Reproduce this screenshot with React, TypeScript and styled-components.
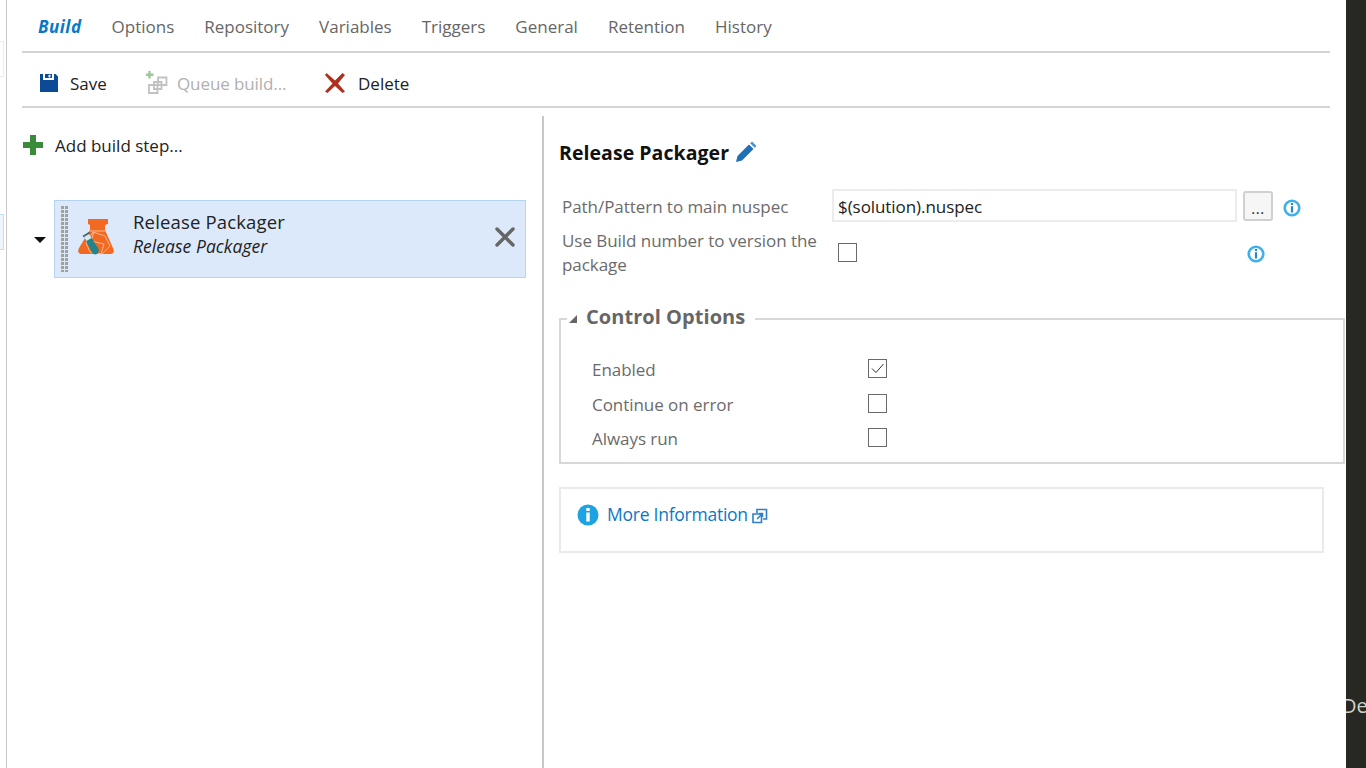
import React from 'react'
import styled, { createGlobalStyle } from 'styled-components'

const GlobalStyle = createGlobalStyle`
  html, body {
    margin: 0;
    padding: 0;
    height: 100%;
    overflow: hidden;
    background: #fff;
  }
  body {
    font-family: 'Open Sans', 'Noto Sans', sans-serif;
    color: #222;
  }
`

const Page = styled.div`
  display: flex;
  width: 1366px;
  height: 768px;
  overflow: hidden;
`

const Gutter = styled.div`
  width: 6px;
  height: 768px;
  flex: none;
  border-right: 1px solid #c8c8c8;
  padding-top: 41px;
  box-sizing: content-box;
`

const GutterTab = styled.div<{ $active?: boolean }>`
  width: 3px;
  height: 34px;
  margin-bottom: 137px;
  border: 1px solid ${({ $active }) => ($active ? '#c4dcf6' : '#ececec')};
  border-left: 0;
  background: ${({ $active }) => ($active ? '#eef5fd' : '#fff')};
`

const Main = styled.div`
  width: 1339px;
  flex: none;
  height: 768px;
  padding: 0 16px 0 15px;
  box-sizing: border-box;
  display: flex;
  flex-direction: column;
`

const Tabs = styled.nav`
  height: 53px;
  box-sizing: border-box;
  flex: none;
  display: flex;
  align-items: center;
  gap: 30px;
  padding: 1px 0 0 16px;
  border-bottom: 2px solid #d4d4d4;
`

const Tab = styled.a<{ $active?: boolean }>`
  font-size: 17px;
  letter-spacing: ${({ $active }) => ($active ? '0.5px' : '0')};
  color: ${({ $active }) => ($active ? '#0a78c8' : '#666')};
  font-weight: ${({ $active }) => ($active ? 700 : 400)};
  font-style: ${({ $active }) => ($active ? 'italic' : 'normal')};
`

const Toolbar = styled.div`
  height: 55px;
  box-sizing: border-box;
  flex: none;
  display: flex;
  align-items: center;
  padding: 7px 0 0 17px;
  border-bottom: 2px solid #d4d4d4;
`

const ToolButton = styled.button<{ $disabled?: boolean; $width: number; $gap: number }>`
  display: flex;
  align-items: center;
  gap: ${({ $gap }) => $gap}px;
  width: ${({ $width }) => $width}px;
  padding: 0;
  border: 0;
  background: none;
  font: inherit;
  font-size: 17px;
  letter-spacing: ${({ $disabled }) => ($disabled ? '-0.1px' : '0')};
  color: ${({ $disabled }) => ($disabled ? '#b0b0b0' : '#222')};
`

const Body = styled.div`
  flex: 1;
  display: flex;
  padding-top: 8px;
  min-height: 0;
`

const LeftPane = styled.div`
  width: 520px;
  flex: none;
  border-right: 2px solid #c8c8c8;
`

const AddStep = styled.div`
  display: flex;
  align-items: center;
  gap: 11px;
  height: 30px;
  margin-top: 14px;
  font-size: 17px;
  color: #222;
`

const StepRow = styled.div`
  display: flex;
  align-items: center;
  margin-top: 40px;
`

const Caret = styled.span`
  width: 0;
  height: 0;
  margin: 2px 8px 0 12px;
  border-left: 6px solid transparent;
  border-right: 6px solid transparent;
  border-top: 6px solid #111;
`

const StepCard = styled.div`
  width: 472px;
  height: 78px;
  box-sizing: border-box;
  border: 1px solid #b5d4f4;
  background: #dbe9fa;
  display: flex;
  align-items: center;
  padding: 0 9px 0 6px;
`

const StepText = styled.div`
  flex: 1;
  align-self: flex-start;
  margin: 8px 0 0 18px;
`

const StepTitle = styled.div`
  font-size: 18.5px;
  line-height: 25px;
  letter-spacing: 0.16px;
  color: #222;
`

const StepSubtitle = styled.div`
  font-size: 17.5px;
  line-height: 25px;
  font-style: italic;
  letter-spacing: 0.05px;
  color: #222;
`

const RightPane = styled.div`
  flex: 1;
  min-width: 0;
  padding: 20px 0 0 15px;
`

const TaskHeading = styled.h2`
  display: flex;
  align-items: center;
  gap: 6px;
  height: 32px;
  margin: 0 0 21px;
  font-size: 19.5px;
  font-weight: 700;
  letter-spacing: 0.05px;
  color: #111;
`

const FieldRow = styled.div`
  display: flex;
  align-items: flex-start;
  padding-left: 3px;
`

const FieldLabel = styled.label<{ $pad: number }>`
  width: 270px;
  flex: none;
  font-size: 17px;
  line-height: 24px;
  letter-spacing: -0.05px;
  color: #6b6b6b;
  padding-top: ${({ $pad }) => $pad}px;
`

const TextInput = styled.input`
  width: 405px;
  height: 33px;
  box-sizing: border-box;
  flex: none;
  padding: 2px 4px 0;
  border: 2px solid #ececec;
  outline: none;
  background: #fff;
  font: inherit;
  font-size: 17px;
  letter-spacing: -0.07px;
  color: #222;
`

const BrowseButton = styled.button`
  width: 30px;
  height: 30px;
  margin: 2px 0 0 6px;
  padding: 4px 0 0;
  border: 2px solid #d0d0d0;
  border-radius: 3px;
  background: #f6f6f6;
  font: inherit;
  font-size: 15px;
  letter-spacing: 0.6px;
  color: #222;
`

const CheckBox = styled.span<{ $left: number; $top?: number }>`
  display: inline-flex;
  align-items: center;
  justify-content: center;
  width: 19px;
  height: 19px;
  box-sizing: border-box;
  flex: none;
  border: 1px solid #6a6a6a;
  background: #fff;
  margin-left: ${({ $left }) => $left}px;
  margin-top: ${({ $top }) => $top ?? 0}px;
`

const InfoSpot = styled.span<{ $left: number; $top: number }>`
  display: inline-flex;
  flex: none;
  margin-left: ${({ $left }) => $left}px;
  margin-top: ${({ $top }) => $top}px;
`

const Section = styled.fieldset`
  width: 786px;
  height: 158px;
  box-sizing: border-box;
  margin: 29px 0 0 0;
  padding: 27px 0 0 31px;
  border: 2px solid #d8d8d8;
`

const SectionLegend = styled.legend`
  display: flex;
  align-items: center;
  gap: 9px;
  margin-left: -25px;
  padding: 0 10px 0 2px;
  font-size: 20px;
  line-height: 26px;
  font-weight: 700;
  letter-spacing: 0.05px;
  color: #666;
  transform: translateY(-2px);
`

const LegendCaret = styled.span`
  width: 0;
  height: 0;
  margin-top: 3px;
  border-left: 8px solid transparent;
  border-bottom: 8px solid #666;
`

const OptionRow = styled.div`
  display: flex;
  align-items: flex-start;
  height: 34.5px;
`

const OptionLabel = styled.span`
  width: 267px;
  flex: none;
  margin-top: 1px;
  font-size: 17px;
  line-height: 19px;
  letter-spacing: -0.05px;
  color: #6b6b6b;
`

const InfoBox = styled.div`
  width: 765px;
  height: 66px;
  box-sizing: border-box;
  margin: 23px 0 0 0;
  padding: 15px 0 0 16px;
  border: 2px solid #eaeaea;
  display: flex;
  align-items: flex-start;
  gap: 8px;
`

const InfoLink = styled.a`
  display: flex;
  align-items: center;
  gap: 4px;
  height: 24px;
  margin-top: -2px;
  font-size: 17.5px;
  letter-spacing: -0.25px;
  color: #0a78c8;
`

const SidePanel = styled.div`
  flex: 1;
  height: 768px;
  background: #272822;
  overflow: hidden;
  padding-top: 692px;
  box-sizing: border-box;
`

const SideText = styled.div`
  margin-left: -4px;
  font-size: 20px;
  line-height: 28px;
  color: #d0d0c8;
  white-space: nowrap;
`

const SaveIcon = () => (
  <svg width="20" height="20" viewBox="0 0 20 20">
    <path d="M1 1h3v6h11V1h1.500L19 3.500V19H1z" fill="#0b4a94" />
    <path d="M6 1h7v4H6z" fill="#0b4a94" />
    <path d="M9.500 1.800h2v2.600h-2z" fill="#fff" />
  </svg>
)

const QueueIcon = () => (
  <svg width="24" height="24" viewBox="0 0 24 24" fill="none">
    <path d="M4.500 0v7.500M1 3.800h7.500" stroke="#9cc79c" strokeWidth="2.400" />
    <path d="M13 6.500h8.500v7.500H13zM4 14h8.500v8H4zM9 11h7.500v7H9z" stroke="#c2c2c2" strokeWidth="1.800" />
  </svg>
)

const DeleteIcon = () => (
  <svg width="22" height="22" viewBox="0 0 22 22">
    <path d="M2.500 1 11 8.500 18.500 1 21 3l-7 8.500 7 8-2.500 1.500L11 14l-7.500 7L1 19.500l7.500-8L1 3z" fill="#b03020" />
  </svg>
)

const PlusIcon = () => (
  <svg width="22" height="22" viewBox="0 0 22 22">
    <path d="M8 1h6v7h7v6h-7v7H8v-7H1V8h7z" fill="#3b8c3a" />
  </svg>
)

const Gripper = () => (
  <svg width="8" height="66" viewBox="0 0 8 66">
    <pattern id="grip" width="4" height="4" patternUnits="userSpaceOnUse">
      <rect width="3" height="3" fill="#a0a0a0" />
    </pattern>
    <rect width="8" height="66" fill="url(#grip)" />
  </svg>
)

const FlaskIcon = () => (
  <svg width="38" height="40" viewBox="0 0 38 40" style={{ marginLeft: 8, marginTop: -4 }}>
    <path d="M11 2h20v5l-3 1v5l8 18c2 4 0 6-3 6H5c-3 0-5-2-3-6l11-18V8l-2-1z" fill="#f26a21" />
    <path d="M13 14h15M9 26l7-11 12 4 5 10-8 8-12-2zM17 15l-3 9 13 3M24 37l3-10" stroke="#f9b892" strokeWidth="1" fill="none" />
    <path d="M7 20l5-3 9 14c1.500 3 .5 5-1 6s-3.500 .5-5-1.500z" fill="#22858c" />
    <path d="M7 20l5-3 2.500 4-5 3z" fill="#dbe9ee" />
    <path d="M6 19.500l6.500-4" stroke="#4b6272" strokeWidth="1.500" />
  </svg>
)

const RemoveIcon = () => (
  <svg width="22" height="22" viewBox="0 0 22 22" style={{ marginTop: -4 }}>
    <path d="M3 3l16 16M19 3 3 19" stroke="#666" strokeWidth="3.400" strokeLinecap="round" />
  </svg>
)

const PencilIcon = () => (
  <svg width="22" height="22" viewBox="0 0 22 22">
    <path d="M1 21l1.500-6L14 3.500l4.500 4.500L7 19.500z" fill="#1f6fb8" />
    <path d="M15.200 2.300 17 .5l4.500 4.500-1.800 1.800z" fill="#4a90d0" />
  </svg>
)

const RingInfo = () => (
  <svg width="18" height="18" viewBox="0 0 18 18">
    <circle cx="9" cy="9" r="7.300" fill="#fff" stroke="#3fb0ec" strokeWidth="2.600" />
    <rect x="7.900" y="4" width="2.200" height="2" fill="#2a87c0" />
    <rect x="7.900" y="7.200" width="2.200" height="6.300" fill="#2a87c0" />
  </svg>
)

const SolidInfo = () => (
  <svg width="22" height="22" viewBox="0 0 22 22">
    <circle cx="11" cy="11" r="10.500" fill="#1ea3e2" />
    <rect x="9.300" y="4" width="3.400" height="3" fill="#fff" />
    <rect x="9.300" y="8.500" width="3.400" height="9" fill="#fff" />
  </svg>
)

const ExternalIcon = () => (
  <svg width="16" height="16" viewBox="0 0 16 16" fill="none" style={{ marginTop: 4 }}>
    <path d="M1 6h8.500v8.500H1z" stroke="#2f7fc4" strokeWidth="1.600" />
    <path d="M5 5V1.500h9.500V11H11" stroke="#2f7fc4" strokeWidth="1.600" />
    <path d="M5 11l5-5M7 5.500h3.500V9" stroke="#2f7fc4" strokeWidth="1.500" />
  </svg>
)

const CheckMark = () => (
  <svg width="15" height="15" viewBox="0 0 15 15" fill="none">
    <path d="M2 7.500 6 11.500 13.500 3" stroke="#333" strokeWidth="1" />
  </svg>
)

const TABS = ['Build', 'Options', 'Repository', 'Variables', 'Triggers', 'General', 'Retention', 'History']

const OPTIONS = [
  { label: 'Enabled', checked: true },
  { label: 'Continue on error', checked: false },
  { label: 'Always run', checked: false },
]

export default function App() {
  return (
    <Page>
      <GlobalStyle />
      <Gutter>
        <GutterTab />
        <GutterTab $active />
      </Gutter>
      <Main>
        <Tabs>
          {TABS.map((tab) => (
            <Tab key={tab} $active={tab === 'Build'}>
              {tab}
            </Tab>
          ))}
        </Tabs>
        <Toolbar>
          <ToolButton $width={106} $gap={11}>
            <SaveIcon />
            Save
          </ToolButton>
          <ToolButton $width={179} $gap={8} $disabled>
            <QueueIcon />
            Queue build...
          </ToolButton>
          <ToolButton $width={110} $gap={12}>
            <DeleteIcon />
            Delete
          </ToolButton>
        </Toolbar>
        <Body>
          <LeftPane>
            <AddStep>
              <PlusIcon />
              Add build step...
            </AddStep>
            <StepRow>
              <Caret />
              <StepCard>
                <Gripper />
                <FlaskIcon />
                <StepText>
                  <StepTitle>Release Packager</StepTitle>
                  <StepSubtitle>Release Packager</StepSubtitle>
                </StepText>
                <RemoveIcon />
              </StepCard>
            </StepRow>
          </LeftPane>
          <RightPane>
            <TaskHeading>
              Release Packager
              <PencilIcon />
            </TaskHeading>
            <FieldRow>
              <FieldLabel $pad={6}>Path/Pattern to main nuspec</FieldLabel>
              <TextInput defaultValue="$(solution).nuspec" readOnly />
              <BrowseButton>...</BrowseButton>
              <InfoSpot $left={10} $top={10}>
                <RingInfo />
              </InfoSpot>
            </FieldRow>
            <FieldRow>
              <FieldLabel $pad={7}>
                Use Build number to version the package
              </FieldLabel>
              <CheckBox $left={6} $top={21} />
              <InfoSpot $left={390} $top={23}>
                <RingInfo />
              </InfoSpot>
            </FieldRow>
            <Section>
              <SectionLegend>
                <LegendCaret />
                Control Options
              </SectionLegend>
              {OPTIONS.map((option) => (
                <OptionRow key={option.label}>
                  <OptionLabel>{option.label}</OptionLabel>
                  <CheckBox $left={9}>{option.checked && <CheckMark />}</CheckBox>
                </OptionRow>
              ))}
            </Section>
            <InfoBox>
              <SolidInfo />
              <InfoLink>
                More Information
                <ExternalIcon />
              </InfoLink>
            </InfoBox>
          </RightPane>
        </Body>
      </Main>
      <SidePanel>
        <SideText>De</SideText>
      </SidePanel>
    </Page>
  )
}
